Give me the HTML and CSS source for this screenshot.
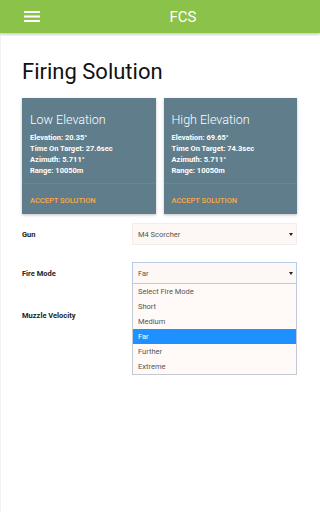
FILE: index.html
```html
<!doctype html>
<html lang="en">

<head>
    <meta charset="utf-8">
    <title>FCS</title>
    <meta name="viewport" content="width=device-width, initial-scale=1">
    <link rel="stylesheet" href="styles.css">
</head>

<body>
    <nav class="topbar">
        <a class="menu-btn" href="#">
            <svg width="16" height="11" viewBox="0 0 16 11">
                <rect x="0" y="0" width="16" height="2" fill="#fff"/>
                <rect x="0" y="4.5" width="16" height="2" fill="#fff"/>
                <rect x="0" y="9" width="16" height="2" fill="#fff"/>
            </svg>
        </a>
        <div class="brand">FCS</div>
    </nav>

    <div class="page">
        <h4 class="page-title">Firing Solution</h4>

        <div class="cards">
            <div class="card">
                <div class="card-content">
                    <span class="card-title">Low Elevation</span>
                    <p>Elevation: 20.35°</p>
                    <p>Time On Target: 27.6sec</p>
                    <p>Azimuth: 5.711°</p>
                    <p>Range: 10050m</p>
                </div>
                <div class="card-action"><a href="#">Accept Solution</a></div>
            </div>
            <div class="card">
                <div class="card-content">
                    <span class="card-title">High Elevation</span>
                    <p>Elevation: 69.65°</p>
                    <p>Time On Target: 74.3sec</p>
                    <p>Azimuth: 5.711°</p>
                    <p>Range: 10050m</p>
                </div>
                <div class="card-action"><a href="#">Accept Solution</a></div>
            </div>
        </div>

        <div class="form">
            <div class="field-row">
                <label>Gun</label>
                <div class="select-wrap">
                    <div class="select">
                        <span>M4 Scorcher</span>
                        <svg class="caret" width="4" height="3" viewBox="0 0 4 3"><path d="M0 0h4L2 3z" fill="#222"/></svg>
                    </div>
                </div>
            </div>
            <div class="field-row">
                <label>Fire Mode</label>
                <div class="select-wrap">
                    <div class="select select-open">
                        <span>Far</span>
                        <svg class="caret" width="4" height="3" viewBox="0 0 4 3"><path d="M0 0h4L2 3z" fill="#222"/></svg>
                    </div>
                    <ul class="options">
                        <li>Select Fire Mode</li>
                        <li>Short</li>
                        <li>Medium</li>
                        <li class="active">Far</li>
                        <li>Further</li>
                        <li>Extreme</li>
                    </ul>
                </div>
            </div>
            <div class="field-row">
                <label>Muzzle Velocity</label>
                <div class="text-input"></div>
            </div>
        </div>
    </div>
</body>

</html>
```

FILE: styles.css
```css
html,
body {
    margin: 0;
    padding: 0;
    background: #fff;
    font-family: Roboto, "Noto Sans", sans-serif;
}

.topbar {
    position: relative;
    z-index: 2;
    height: 33px;
    background: #8bc34a;
    display: flex;
    align-items: center;
    box-shadow: 0 1px 3px rgba(0, 0, 0, 0.18), 0 2px 2px rgba(0, 0, 0, 0.08);
}

.menu-btn {
    width: 46px;
    padding-left: 24px;
    box-sizing: border-box;
    display: flex;
}

.brand {
    flex: 1;
    text-align: center;
    color: #fff;
    font-size: 15px;
}

.page {
    box-sizing: border-box;
    min-height: calc(100vh - 33px);
    padding: 26px 23px 0 21px;
    border-left: 1px solid #f2f2f2;
}

.page-title {
    margin: 0;
    font-size: 22px;
    line-height: 26px;
    font-weight: 400;
    color: #111;
}

.cards {
    margin-top: 13px;
    display: grid;
    grid-template-columns: 1fr 1fr;
    gap: 8px;
}

.card {
    background: #607d8b;
    color: #fff;
    box-shadow: 0 1px 2px rgba(0, 0, 0, 0.16), 0 1px 4px rgba(0, 0, 0, 0.1);
}

.card-content {
    padding: 14px 8px 7px;
}

.card-title {
    display: block;
    font-size: 12.5px;
    line-height: 15px;
    font-weight: 300;
    margin-bottom: 5px;
}

.card-content p {
    margin: 0;
    font-size: 7.5px;
    line-height: 11px;
    font-weight: 700;
}

.card-action {
    border-top: 1px solid rgba(160, 160, 160, 0.2);
    padding: 0 8px;
    line-height: 27px;
}

.card-action a {
    color: #ffab40;
    text-decoration: none;
    text-transform: uppercase;
    font-size: 7.5px;
    font-weight: 500;
}

.form {
    margin-top: 9px;
}

.field-row {
    display: grid;
    grid-template-columns: 110px 1fr;
    align-items: center;
    margin-bottom: 17px;
}

.field-row label {
    font-size: 7.5px;
    font-weight: 700;
    color: #222;
}

.select-wrap {
    position: relative;
}

.select {
    height: 22px;
    box-sizing: border-box;
    border: 1px solid #f4ecea;
    background: #fdf7f5;
    display: flex;
    align-items: center;
    justify-content: space-between;
    padding: 0 3px 0 5px;
    font-size: 7.5px;
    color: #555;
}

.select-open {
    border-color: #b9cce6;
}

.options {
    position: absolute;
    z-index: 3;
    top: 100%;
    left: 0;
    right: 0;
    margin: 0;
    padding: 0;
    list-style: none;
    background: #fff9f7;
    border: 1px solid #c4c9d2;
    border-top: none;
}

.options li {
    height: 15px;
    line-height: 15px;
    padding-left: 5px;
    font-size: 7.5px;
    color: #555;
}

.options li.active {
    background: #1e90ff;
    color: #fff;
}

.text-input {
    height: 28px;
}
```
